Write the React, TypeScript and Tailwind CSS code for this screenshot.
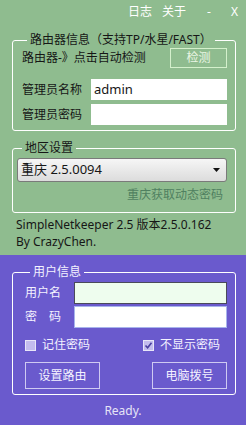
import { ReactNode } from "react";

const font = { fontFamily: '"Noto Sans", "Noto Sans CJK SC", sans-serif' };

function Group({ title, children, className }: { title: string; children: ReactNode; className?: string }) {
  return (
    <fieldset className={`mx-[12px] w-[224px] rounded-[3px] border border-white ${className ?? ""}`}>
      <legend className="ml-[5px] px-[3px] text-[12px] leading-[14px]">{title}</legend>
      {children}
    </fieldset>
  );
}

function CheckBox({ checked, label }: { checked?: boolean; label: string }) {
  return (
    <label className="flex items-center gap-[6px]">
      <span className="flex h-[11px] w-[11px] items-center justify-center border border-[#e8e6f8] bg-[#c3bcee]">
        {checked && (
          <svg width="9" height="9" viewBox="0 0 9 9">
            <path d="M1.5 4.5 L3.6 6.8 L7.5 1.8" fill="none" stroke="#4a3fa0" strokeWidth="1.6" />
          </svg>
        )}
      </span>
      <span>{label}</span>
    </label>
  );
}

export default function App() {
  return (
    <div className="flex h-[425px] w-[246px] flex-col text-[12px]" style={font}>
      <div className="flex h-[255px] flex-col bg-[#8FBC8F] text-[#161616]">
        <div className="flex h-[33px] items-start pt-[3px] text-white">
          <span className="ml-[128px]">日志</span>
          <span className="ml-[10px]">关于</span>
          <span className="ml-[21px]">-</span>
          <span className="ml-[20px]">X</span>
        </div>

        <Group title="路由器信息（支持TP/水星/FAST）" className="pb-[5px] pl-[9px] pr-[8px]">
          <div className="mt-[1px] flex items-center justify-between">
            <span>路由器-》点击自动检测</span>
            <button className="h-[20px] w-[57px] border border-[#d4f0cc] text-[#eaf6e4]">检测</button>
          </div>
          <div className="mt-[11px] flex items-center justify-between">
            <span>管理员名称</span>
            <div className="flex h-[21px] w-[136px] items-center bg-white px-[3px] text-[13px]">admin</div>
          </div>
          <div className="mt-[4px] flex items-center justify-between">
            <span>管理员密码</span>
            <div className="h-[21px] w-[136px] bg-white" />
          </div>
        </Group>

        <Group title="地区设置" className="mt-[10px] pb-[8px] pl-[4px] pr-[8px]">
          <div className="mt-[3px] flex h-[24px] items-center justify-between rounded-[3px] border border-[#7a7a7a] bg-gradient-to-b from-[#f6f6f6] to-[#dcdcdc] pl-[3px] pr-[6px] text-[13px]">
            <span>重庆 2.5.0094</span>
            <svg width="7" height="4" viewBox="0 0 7 4">
              <path d="M0 0 H7 L3.5 4 Z" fill="#111" />
            </svg>
          </div>
          <div className="mt-[4px] pr-[4px] text-right text-[#4f8060]">重庆获取动态密码</div>
        </Group>

        <div className="ml-[16px] mt-[3px] leading-[17px]">
          <div>SimpleNetkeeper 2.5 版本2.5.0.162</div>
          <div>By CrazyChen.</div>
        </div>
      </div>

      <div className="flex flex-1 flex-col bg-[#6A5ACD] text-[#f4f2ff]">
        <Group title="用户信息" className="mt-[10px] pb-[5px] pl-[12px] pr-[8px]">
          <div className="mt-[3px] flex items-center justify-between">
            <span>用户名</span>
            <div className="h-[22px] w-[153px] border border-[#4a4a5a] bg-[#eefdee]" />
          </div>
          <div className="mt-[2px] flex items-center justify-between">
            <span>密　码</span>
            <div className="h-[22px] w-[153px] border border-[#a8b4ec] bg-white" />
          </div>
          <div className="mt-[8px] flex items-center">
            <CheckBox label="记住密码" />
            <div className="ml-[53px]">
              <CheckBox checked label="不显示密码" />
            </div>
          </div>
          <div className="mt-[8px] flex justify-between">
            <button className="h-[27px] w-[75px] border border-[#cfcaf2]">设置路由</button>
            <button className="h-[27px] w-[75px] border border-[#cfcaf2]">电脑拨号</button>
          </div>
        </Group>
        <div className="mt-[7px] text-center text-[#e6e4f6]">Ready.</div>
      </div>
    </div>
  );
}
